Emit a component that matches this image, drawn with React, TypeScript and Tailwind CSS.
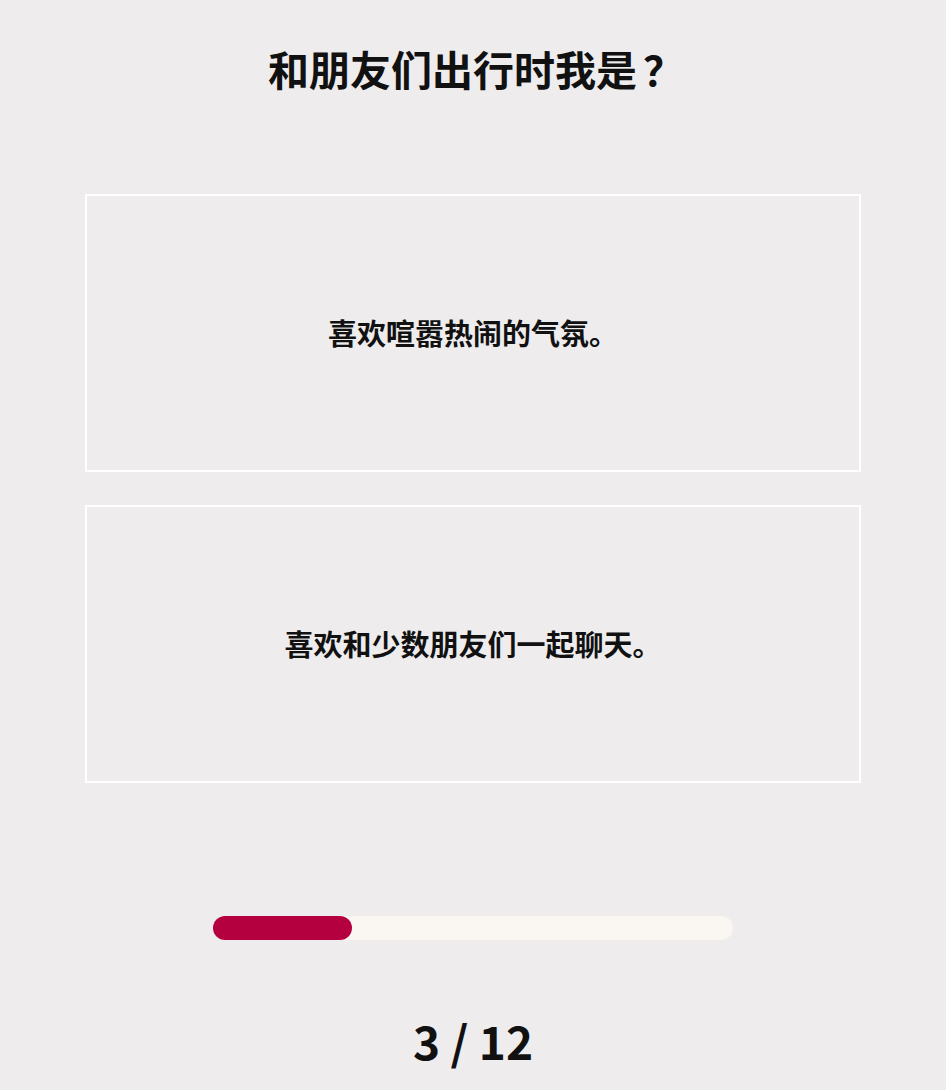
import React from "react";

const font = { fontFamily: '"Noto Sans CJK SC", "Noto Sans", sans-serif' };

const options = ["喜欢喧嚣热闹的气氛。", "喜欢和少数朋友们一起聊天。"];

export default function App() {
  const current = 3;
  const total = 12;

  return (
    <div className="min-h-[1090px] w-full bg-[#eeeced] text-[#111]" style={font}>
      <div className="flex flex-col items-center">
        <h1 className="mt-[48px] flex h-[40px] items-center text-[41px] font-bold leading-[40px]">
          和朋友们出行时我是
          <span className="inline-block w-[41px] pl-[6px]">？</span>
        </h1>

        {/* answer cards */}
        <div className="mt-[106px] flex w-[776px] flex-col gap-[33px]">
          {options.map((text) => (
            <button
              key={text}
              type="button"
              className="flex h-[278px] w-full items-center justify-center border-2 border-white bg-transparent pb-[1px] text-[29px] font-bold"
            >
              {text}
            </button>
          ))}
        </div>

        {/* progress */}
        <div className="mt-[133px] h-[24px] w-[520px] rounded-full bg-[#faf6f2]">
          <div className="h-full rounded-full bg-[#b5003f]" style={{ width: `${(139 / 520) * 100}%` }} />
        </div>

        <div className="mt-[76px] text-[46px] font-bold leading-[48px]">
          {current} / {total}
        </div>
      </div>
    </div>
  );
}
